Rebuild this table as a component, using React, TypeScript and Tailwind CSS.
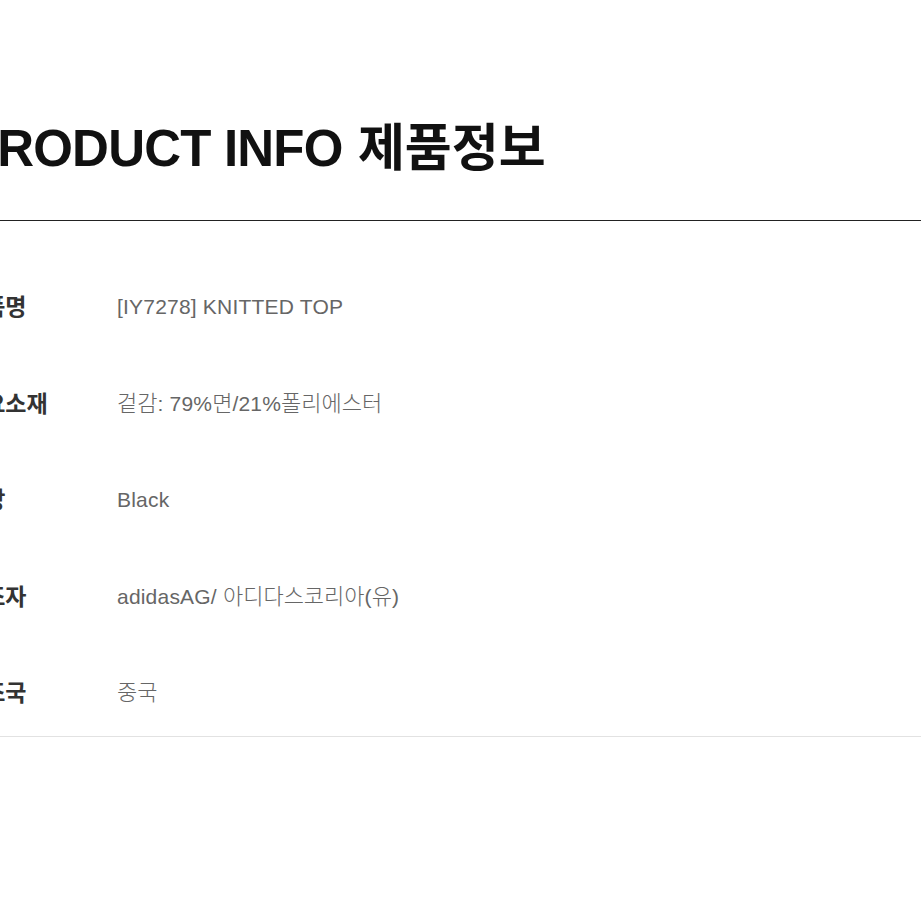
import React from "react";

const rows: [string, string][] = [
  ["제품명", "[IY7278] KNITTED TOP"],
  ["주요소재", "겉감: 79%면/21%폴리에스터"],
  ["색상", "Black"],
  ["제조자", "adidasAG/ 아디다스코리아(유)"],
  ["제조국", "중국"],
];

function Value({ text }: { text: string }) {
  const parts = text.split(/([\uac00-\ud7a3]+)/).filter((p) => p.length > 0);
  return (
    <>
      {parts.map((p, i) =>
        /[\uac00-\ud7a3]/.test(p) ? (
          <span key={i} className="text-[22px] tracking-normal">
            {p}
          </span>
        ) : (
          <span key={i}>{p}</span>
        )
      )}
    </>
  );
}

export default function App() {
  return (
    <div
      className="w-[921px] h-[921px] overflow-hidden bg-white"
      style={{ fontFamily: '"Liberation Sans", "Noto Sans CJK KR", sans-serif' }}
    >
      <div className="ml-[-36px] w-[957px] pt-[119px]">
        <h2 className="text-[51px] leading-[60px] font-bold text-[#111] tracking-[-0.8px] h-[101px] whitespace-nowrap">
          PRODUCT INFO{" "}
          <span className="ml-[2px] text-[51px] tracking-normal">제품정보</span>
        </h2>
        <div className="border-t border-[#222] border-b border-b-[#e2e2e2] pt-[74px] pb-[31px] flex flex-col gap-[72.5px]">
          {rows.map(([k, v]) => (
            <div key={k} className="flex items-center h-[24px] leading-[24px] whitespace-nowrap">
              <div className="w-[153px] shrink-0 ml-[-1px] text-[23px] font-semibold text-[#333]">{k}</div>
              <div className="ml-[1px] text-[21px] tracking-[0.2px] text-[#666] font-light">
                <Value text={v} />
              </div>
            </div>
          ))}
        </div>
      </div>
    </div>
  );
}
